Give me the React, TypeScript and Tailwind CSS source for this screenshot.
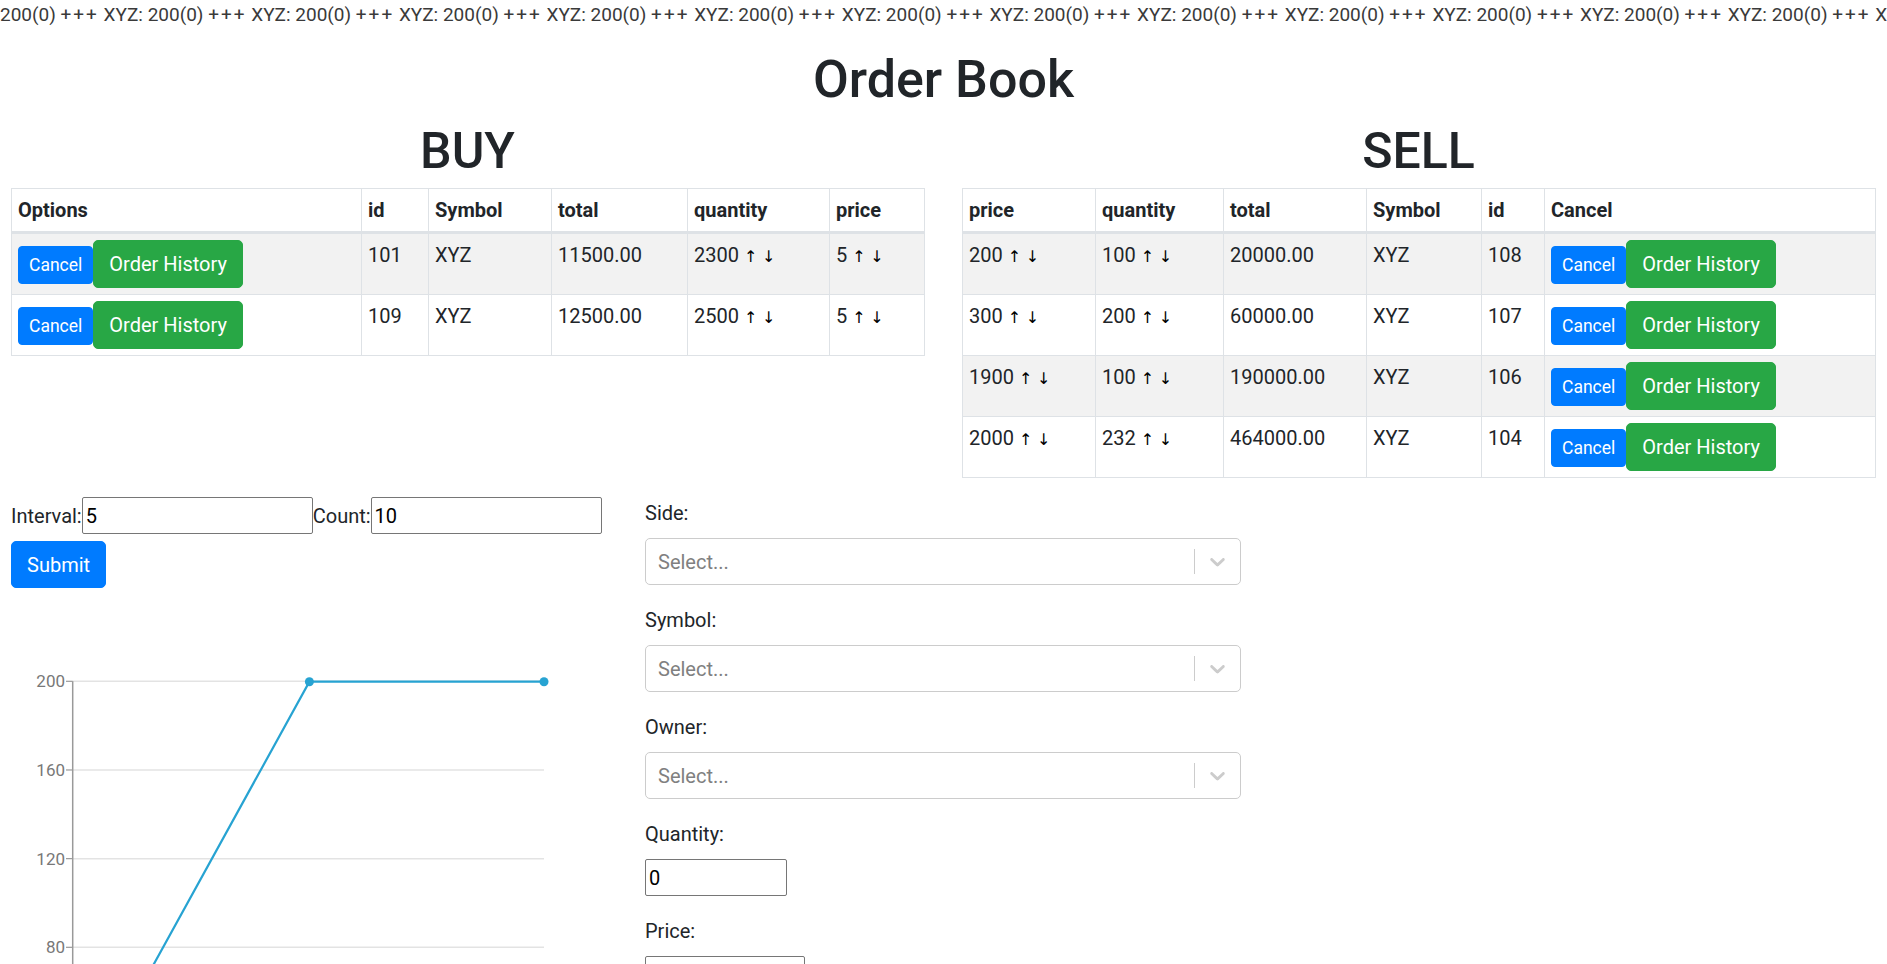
import React from 'react';

const buyCols = [
  { label: 'Options', w: 'w-[350px]' },
  { label: 'id', w: 'w-[67px]' },
  { label: 'Symbol', w: 'w-[123px]' },
  { label: 'total', w: 'w-[136px]' },
  { label: 'quantity', w: 'w-[142px]' },
  { label: 'price', w: 'w-[95px]' },
];

const sellCols = [
  { label: 'price', w: 'w-[133px]' },
  { label: 'quantity', w: 'w-[128px]' },
  { label: 'total', w: 'w-[143px]' },
  { label: 'Symbol', w: 'w-[115px]' },
  { label: 'id', w: 'w-[63px]' },
  { label: 'Cancel', w: 'w-[331px]' },
];

const buyRows = [
  { id: 101, symbol: 'XYZ', total: '11500.00', quantity: 2300, price: 5 },
  { id: 109, symbol: 'XYZ', total: '12500.00', quantity: 2500, price: 5 },
];

const sellRows = [
  { price: 200, quantity: 100, total: '20000.00', symbol: 'XYZ', id: 108 },
  { price: 300, quantity: 200, total: '60000.00', symbol: 'XYZ', id: 107 },
  { price: 1900, quantity: 100, total: '190000.00', symbol: 'XYZ', id: 106 },
  { price: 2000, quantity: 232, total: '464000.00', symbol: 'XYZ', id: 104 },
];

const cell = 'border border-[#dee2e6] px-[6px] py-[6px] align-top';
const head = 'border border-b-[3px] border-[#dee2e6] px-[6px] py-[6px] text-left align-bottom font-bold';

function Arrows() {
  return (
    <span className="font-['DejaVu_Sans',sans-serif] text-[16px] text-black">
      <span className="ml-[5px] inline-block w-[10px] text-center">↑</span>
      <span className="ml-[8px] inline-block w-[10px] text-center">↓</span>
    </span>
  );
}

function Buttons() {
  return (
    <div className="flex items-baseline">
      <button className="rounded-[4px] border border-[#007bff] bg-[#007bff] px-[10px] py-[5px] text-[17.5px] leading-[26px] text-white">
        Cancel
      </button>
      <button className="rounded-[5px] border border-[#28a745] bg-[#28a745] px-[15px] py-[8px] text-[20px] leading-[30px] text-white">
        Order History
      </button>
    </div>
  );
}

function Chevron() {
  return (
    <svg width="25" height="25" viewBox="0 0 20 20" fill="#cccccc">
      <path d="M4.516 7.548c0.436-0.446 1.043-0.481 1.576 0l3.908 3.747 3.908-3.747c0.533-0.481 1.141-0.446 1.574 0 0.436 0.445 0.408 1.197 0 1.615-0.406 0.418-4.695 4.502-4.695 4.502-0.217 0.223-0.502 0.335-0.787 0.335s-0.57-0.112-0.789-0.335c0 0-4.287-4.084-4.695-4.502s-0.436-1.17 0-1.615z" />
    </svg>
  );
}

function SelectField({ label }: { label: string }) {
  return (
    <div className="mb-[20px]">
      <label className="mb-[10px] block">{label}</label>
      <div className="flex h-[47px] items-center rounded-[5px] border border-[#cccccc] bg-white">
        <div className="flex-1 pl-[12px] text-[#808080]">Select...</div>
        <span className="h-[25px] w-px bg-[#cccccc]" />
        <div className="flex items-center px-[10px]">
          <Chevron />
        </div>
      </div>
    </div>
  );
}

function Chart() {
  const grid = [200, 160, 120, 80, 40, 0];
  const y0 = 62.3;
  const step = 88.67;
  const pts = [
    [63.8, 488.6],
    [298.4, 62.7],
    [533, 62.7],
  ];
  return (
    <svg width="600" height="560" className="mt-[31px] block">
      {grid.map((v, i) => (
        <g key={v}>
          <line x1="61.7" x2="533" y1={y0 + i * step} y2={y0 + i * step} stroke="#e3e3e3" strokeWidth="1.5" />
          <line x1="55" x2="61.7" y1={y0 + i * step} y2={y0 + i * step} stroke="#999999" strokeWidth="1.2" />
          <text x="54" y={y0 + i * step + 6} textAnchor="end" fontSize="17" fill="#787878">
            {v}
          </text>
        </g>
      ))}
      <line x1="61.7" x2="61.7" y1={y0} y2="560" stroke="#999999" strokeWidth="1.5" />
      <polyline
        points={pts.map((p) => p.join(',')).join(' ')}
        fill="none"
        stroke="#27a3d2"
        strokeWidth="2.2"
      />
      {pts.map((p, i) => (
        <circle key={i} cx={p[0]} cy={p[1]} r="4.5" fill="#27a3d2" />
      ))}
    </svg>
  );
}

export default function App() {
  return (
    <div className="h-[964px] overflow-hidden bg-white font-[Roboto,'Segoe_UI',Arial,sans-serif] text-[20px] leading-[30px] text-[#212529]">
      <div className="h-[30px] overflow-hidden whitespace-nowrap text-[19px] leading-[30px] text-[#3a3a3a]">
        {Array.from({ length: 14 }).map((_, i) => (
          <span key={i}>
            {i === 0 ? '' : 'XYZ: '}200(0) <span className="tracking-[2px]">+++</span>{' '}
          </span>
        ))}
      </div>

      <h1 className="mt-[19px] text-center text-[52px] leading-[62px] font-medium">Order Book</h1>

      <div className="mt-[10px] grid grid-cols-2 gap-x-[38px] pl-[11px] pr-[12px]">
        <div>
          <h1 className="text-center text-[50px] leading-[60px] font-medium">BUY</h1>
          <table className="mt-[7px] w-full table-fixed border-collapse border border-[#dee2e6]">
            <thead>
              <tr>
                {buyCols.map((c) => (
                  <th key={c.label} className={`${head} ${c.w}`}>
                    {c.label}
                  </th>
                ))}
              </tr>
            </thead>
            <tbody>
              {buyRows.map((r, i) => (
                <tr key={r.id} className={i % 2 === 0 ? 'bg-[#f2f2f2]' : ''}>
                  <td className={cell}>
                    <Buttons />
                  </td>
                  <td className={cell}>{r.id}</td>
                  <td className={cell}>{r.symbol}</td>
                  <td className={cell}>{r.total}</td>
                  <td className={cell}>
                    {r.quantity}
                    <Arrows />
                  </td>
                  <td className={cell}>
                    {r.price}
                    <Arrows />
                  </td>
                </tr>
              ))}
            </tbody>
          </table>
        </div>

        <div>
          <h1 className="text-center text-[50px] leading-[60px] font-medium">SELL</h1>
          <table className="mt-[7px] w-full table-fixed border-collapse border border-[#dee2e6]">
            <thead>
              <tr>
                {sellCols.map((c) => (
                  <th key={c.label} className={`${head} ${c.w}`}>
                    {c.label}
                  </th>
                ))}
              </tr>
            </thead>
            <tbody>
              {sellRows.map((r, i) => (
                <tr key={r.id} className={i % 2 === 0 ? 'bg-[#f2f2f2]' : ''}>
                  <td className={cell}>
                    {r.price}
                    <Arrows />
                  </td>
                  <td className={cell}>
                    {r.quantity}
                    <Arrows />
                  </td>
                  <td className={cell}>{r.total}</td>
                  <td className={cell}>{r.symbol}</td>
                  <td className={cell}>{r.id}</td>
                  <td className={cell}>
                    <Buttons />
                  </td>
                </tr>
              ))}
            </tbody>
          </table>
        </div>
      </div>

      <div className="mt-[19px] flex pl-[11px]">
        <div className="w-[634px] shrink-0">
          <div className="flex h-[37px] items-center">
            <label>Interval:</label>
            <input
              defaultValue="5"
              className="h-[37px] w-[231px] rounded-[2px] border border-[#767676] px-[3px] text-black"
            />
            <label>Count:</label>
            <input
              defaultValue="10"
              className="h-[37px] w-[231px] rounded-[2px] border border-[#767676] px-[3px] text-black"
            />
          </div>
          <button className="mt-[7px] rounded-[5px] border border-[#007bff] bg-[#007bff] px-[15px] py-[7.5px] leading-[30px] text-white">
            Submit
          </button>
          <Chart />
        </div>

        <div className="w-[596px] pt-px">
          <SelectField label="Side:" />
          <SelectField label="Symbol:" />
          <SelectField label="Owner:" />
          <div className="mb-[20px]">
            <label className="mb-[10px] block">Quantity:</label>
            <input
              defaultValue="0"
              className="h-[37px] w-[142px] rounded-[2px] border border-[#767676] px-[3px] text-black"
            />
          </div>
          <div>
            <label className="mb-[10px] block">Price:</label>
            <input className="h-[37px] w-[160px] rounded-[2px] border border-[#767676] px-[3px] text-black" />
          </div>
        </div>
      </div>
    </div>
  );
}
